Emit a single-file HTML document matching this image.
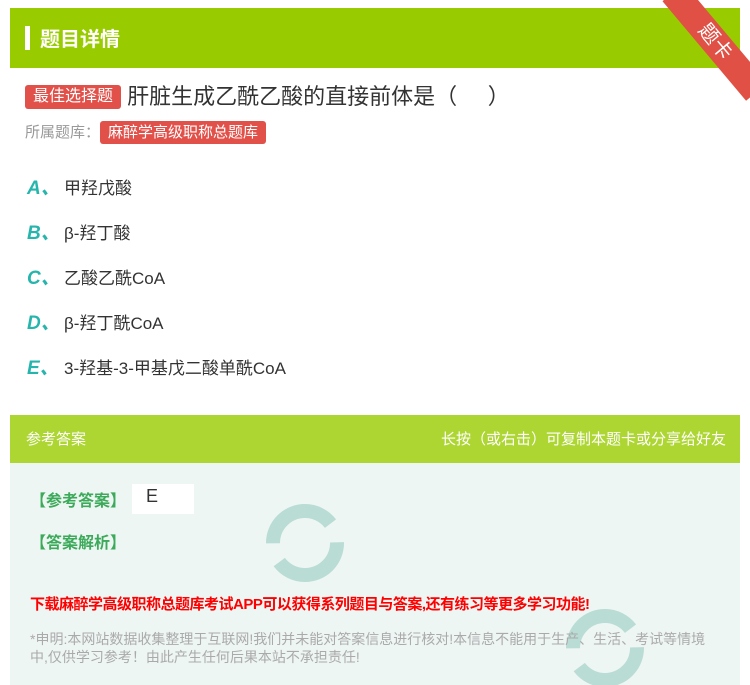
<!DOCTYPE html>
<html><head><meta charset="utf-8"><style>
*{margin:0;padding:0;box-sizing:border-box}
body{width:750px;height:685px;background:#fff;font-family:"Liberation Sans","Noto Sans CJK SC",sans-serif;position:relative;overflow:hidden}
.hd{position:absolute;left:10px;top:8px;width:730px;height:60px;background:#99cc00}
.hd .bar{position:absolute;left:15px;top:18px;width:5px;height:24px;background:#fff}
.hd .t{position:absolute;left:30px;top:15px;color:#fff;font-size:20px;font-weight:bold}
.rib{position:absolute;width:130px;height:28px;background:#e05045;transform:rotate(50deg);color:#fff;font-size:20px;text-align:center;line-height:28px}
.q{position:absolute;left:25px;top:79px;font-size:22px;color:#333;white-space:nowrap}
.tag{display:inline-block;background:#e2504a;color:#fff;border-radius:3px;font-size:16px;padding:0 8px;height:24px;line-height:24px;vertical-align:3px}
.src{position:absolute;left:25px;top:121px;font-size:15px;color:#999}
.src .tag{font-size:15px;height:23px;line-height:23px;vertical-align:0}
.opt{position:absolute;left:27px;font-size:17px;color:#333}
.opt b{color:#26b5ad;font-style:italic;font-size:19px;display:inline-block;width:37px}
.ah{position:absolute;left:10px;top:415px;width:730px;height:48px;background:#add633;color:#fff;font-size:15px}
.ab{position:absolute;left:10px;top:463px;width:730px;height:222px;background:#eef6f4}
.g{color:#3caa5a;font-size:16px;font-weight:bold;position:absolute}
</style></head><body>
<div class="hd"><div class="bar"></div><div class="t">题目详情</div></div>
<div class="rib" style="left:650px;top:28px">题卡</div>
<div class="q"><span class="tag">最佳选择题</span> 肝脏生成乙酰乙酸的直接前体是（&nbsp;&nbsp;&nbsp;&nbsp;&nbsp;）</div>
<div class="src">所属题库：<span class="tag">麻醉学高级职称总题库</span></div>
<div class="opt" style="top:173px"><b>A、</b>甲羟戊酸</div>
<div class="opt" style="top:218px"><b>B、</b>β-羟丁酸</div>
<div class="opt" style="top:263px"><b>C、</b>乙酸乙酰CoA</div>
<div class="opt" style="top:308px"><b>D、</b>β-羟丁酰CoA</div>
<div class="opt" style="top:353px"><b>E、</b>3-羟基-3-甲基戊二酸单酰CoA</div>
<div class="ah"><span style="position:absolute;left:16px;top:13px">参考答案</span><span style="position:absolute;right:14px;top:13px">长按（或右击）可复制本题卡或分享给好友</span></div>
<div class="ab">
<svg style="position:absolute;left:250px;top:40px" width="90" height="80"><circle cx="45" cy="40" r="32" fill="none" stroke="#b9dcd4" stroke-width="14" stroke-dasharray="80 20"/></svg>
<svg style="position:absolute;left:550px;top:140px" width="90" height="82"><circle cx="45" cy="45" r="32" fill="none" stroke="#b9dcd4" stroke-width="14" stroke-dasharray="80 20"/></svg>
<div class="g" style="left:20px;top:24px">【参考答案】</div>
<div style="position:absolute;left:122px;top:21px;width:62px;height:30px;background:#fff;font-size:18px;color:#333;padding:2px 0 0 14px">E</div>
<div class="g" style="left:20px;top:66px">【答案解析】</div>
<div style="position:absolute;left:20px;top:130px;color:#f00;font-size:15px;font-weight:bold;letter-spacing:-0.5px">下载麻醉学高级职称总题库考试APP可以获得系列题目与答案,还有练习等更多学习功能!</div>
<div style="position:absolute;left:20px;top:167px;width:690px;color:#aaa;font-size:14px;line-height:18px">*申明:本网站数据收集整理于互联网!我们并未能对答案信息进行核对!本信息不能用于生产、生活、考试等情境中,仅供学习参考！由此产生任何后果本站不承担责任!</div>
</div>
</body></html>
